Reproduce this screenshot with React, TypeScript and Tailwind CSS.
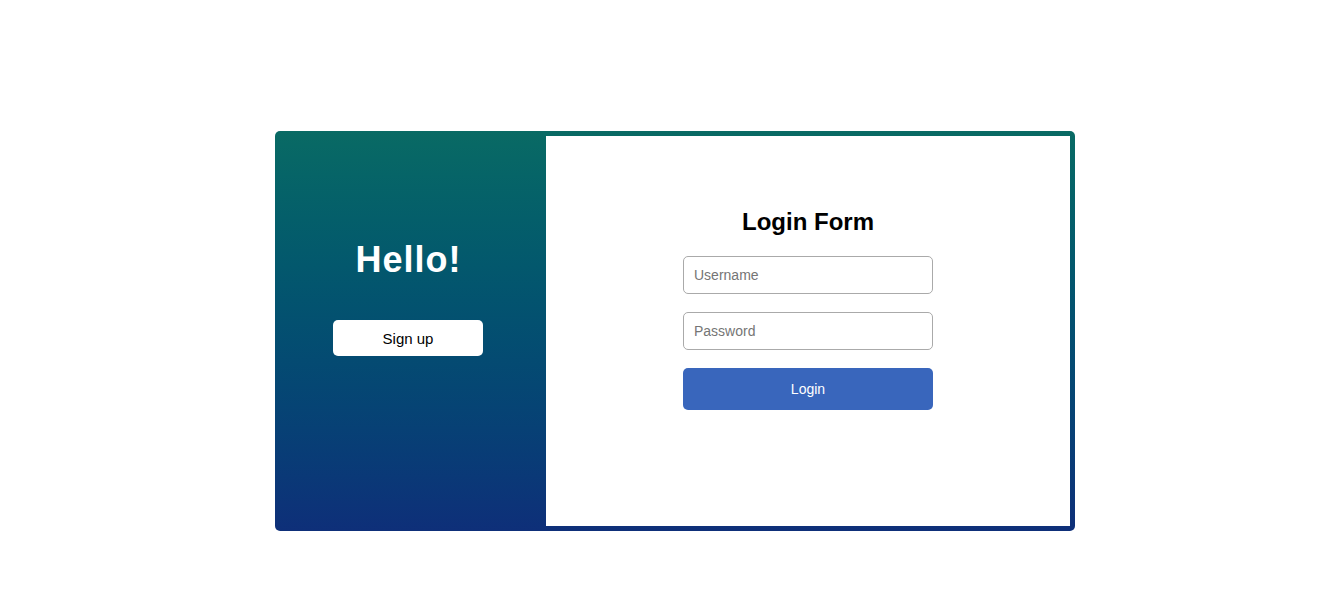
import React from "react";

export default function App() {
  return (
    <div
      className="w-[1337px] h-[614px] bg-white flex pl-[275px] pt-[131px]"
      style={{ fontFamily: '"Liberation Sans", Arial, sans-serif' }}
    >
      <div className="w-[800px] h-[400px] rounded-[5px] bg-gradient-to-b from-[#096a64] to-[#0e2f79] flex">
        <div className="w-[266px] flex flex-col items-center pt-[108px]">
          <h1 className="text-white font-bold text-[36px] leading-[41px] tracking-[1px] pl-[1px]">Hello!</h1>
          <button className="mt-[40px] w-[150px] h-[36px] bg-white rounded-[5px] text-black text-[15px] pt-[2px]">
            Sign up
          </button>
        </div>
        <div className="flex-1 m-[5px] ml-[5px] bg-white flex flex-col items-center pt-[72px]">
          <h2 className="text-black font-bold text-[24px] leading-[28px]">Login Form</h2>
          <input
            type="text"
            placeholder="Username"
            className="mt-[20px] w-[250px] h-[38px] border border-[#aaaaaa] rounded-[5px] px-[10px] text-[14px] placeholder:text-[#757575] outline-none"
          />
          <input
            type="password"
            placeholder="Password"
            className="mt-[18px] w-[250px] h-[38px] border border-[#aaaaaa] rounded-[5px] px-[10px] text-[14px] placeholder:text-[#757575] outline-none"
          />
          <button className="mt-[18px] w-[250px] h-[42px] bg-[#3966bc] rounded-[5px] text-white text-[14px]">
            Login
          </button>
        </div>
      </div>
    </div>
  );
}
